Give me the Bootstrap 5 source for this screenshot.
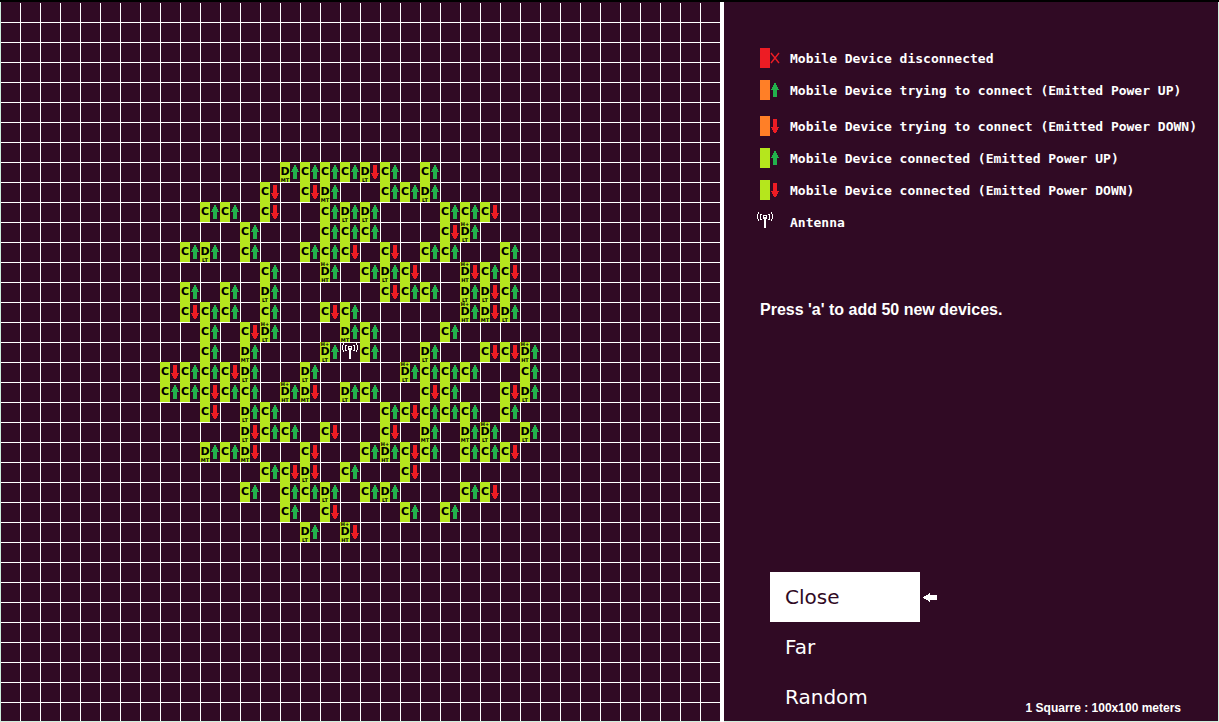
<!DOCTYPE html>
<html lang="en">
<head>
<meta charset="utf-8">
<meta name="viewport" content="width=device-width, initial-scale=1">
<title>Antenna simulation</title>
<link href="https://cdn.jsdelivr.net/npm/bootstrap@5.3.0/dist/css/bootstrap.min.css" rel="stylesheet">
<style>
  :root { --plum: #300a24; --lime: #b5e61d; --mint: #cdeedc; --cell: 20px; }
  body { background: var(--plum); color: #fff; border-top: 2px solid #000; }
  .sim-board {
    display: grid;
    grid-template-columns: repeat(36, var(--cell));
    grid-template-rows: repeat(36, var(--cell));
    background:
      linear-gradient(var(--mint), var(--mint)) 0 0 / 1px 100% no-repeat,
      linear-gradient(var(--mint), var(--mint)) 0 100% / 100% 1px no-repeat,
      linear-gradient(var(--plum), var(--plum)) 0 0 / 100% 1px no-repeat,
      linear-gradient(90deg, #fff 1px, transparent 1px) 0 0 / var(--cell) var(--cell),
      linear-gradient(#fff 1px, transparent 1px) 0 0 / var(--cell) var(--cell);
  }
  .sim-wrap { border-right: 4px solid #fff; }
  .device { width: 20px; height: 20px; }
  .device-tag {
    width: 10px; height: 20px; background: var(--lime); color: #000;
    display: grid; grid-template-rows: 4px 12px 4px;
    justify-items: center; align-items: center;
    font-family: "DejaVu Sans", sans-serif; font-weight: 700;
  }
  .device-kind { font-size: 11px; line-height: 12px; }
  .device-note { font-size: 5px; line-height: 4px; }
  .side-panel { box-shadow: inset -1px -1px var(--mint); padding-left: 36px; }
  .legend { display: grid; row-gap: 10px; padding-top: 46px; font: 700 13px/22px "DejaVu Sans Mono", monospace; }
  .legend-row { display: grid; grid-template-columns: 20px auto; column-gap: 10px; white-space: nowrap; }
  .legend svg, .device svg { display: block; }
  .hint { font: 700 16px/20px "Liberation Sans", sans-serif; margin-top: 66px; }
  .modes { width: 150px; margin-left: 10px; }
  .mode-btn {
    height: 50px; width: 150px; padding: 0 15px; text-align: left; color: #fff;
    font: 400 20px/24px "DejaVu Sans", sans-serif; border: 0; border-radius: 0;
  }
  .mode-btn.active, .mode-btn:hover { background: #fff !important; color: var(--plum) !important; }
  .mode-arrow { margin-left: 3px; }
  .scale-note { font: 700 12px/16px "Liberation Sans", sans-serif; padding: 0 38px 6px 0; }
</style>
</head>
<body>
<svg width="0" height="0" class="position-absolute" aria-hidden="true">
  <defs>
    <path id="up" shape-rendering="crispEdges" fill="#22b14c" d="M4 3h2v2h1v2h1v2h1v1h-2v7H3v-7H1V9h1V7h1V5h1z"/>
    <path id="down" shape-rendering="crispEdges" fill="#ed1c24" d="M3 3h4v8h2v1h-1v2h-1v2h-1v1H4v-1H3v-2H2v-2H1v-1h2z"/>
    <g id="mast" shape-rendering="crispEdges" fill="none" stroke="#fff">
      <path d="M6 4.500H10M6.500 5V7M9.500 5V7M6 7.500H10M3 3.500H5M3.500 4V8M3 8.500H5M11 3.500H13M12.500 4V8M11 8.500H13M1.500 1V3M.5 3V8M1.500 8V10M14.500 1V3M15.500 3V8M14.500 8V10"/>
      <path stroke-width="2" d="M8 6V17"/>
    </g>
  </defs>
</svg>
<div class="d-flex">
  <main class="sim-wrap flex-shrink-0"><div class="sim-board" id="board"></div></main>
  <aside class="side-panel flex-grow-1 d-flex flex-column">
    <div class="legend">
      <div class="legend-row"><svg width="20" height="20"><path fill="#ed1c24" d="M0 0h10v20H0z"/><path stroke="#ed1c24" stroke-width="1.400" d="M11 5l8 10M19 5l-8 10"/></svg><span>Mobile Device disconnected</span></div>
      <div class="legend-row"><svg width="20" height="20"><path fill="#ff7f27" d="M0 0h10v20H0z"/><use href="#up" x="10"/></svg><span>Mobile Device trying to connect (Emitted Power UP)</span></div>
      <div class="legend-row mt-1"><svg width="20" height="20"><path fill="#ff7f27" d="M0 0h10v20H0z"/><use href="#down" x="10"/></svg><span>Mobile Device trying to connect (Emitted Power DOWN)</span></div>
      <div class="legend-row"><svg width="20" height="20"><path fill="#b5e61d" d="M0 0h10v20H0z"/><use href="#up" x="10"/></svg><span>Mobile Device connected (Emitted Power UP)</span></div>
      <div class="legend-row"><svg width="20" height="20"><path fill="#b5e61d" d="M0 0h10v20H0z"/><use href="#down" x="10"/></svg><span>Mobile Device connected (Emitted Power DOWN)</span></div>
      <div class="legend-row"><svg width="20" height="20" overflow="visible"><use href="#mast" x="-3" y="-1"/></svg><span>Antenna</span></div>
    </div>
    <p class="hint mb-0">Press 'a' to add 50 new devices.</p>
    <div class="mt-auto d-flex align-items-end justify-content-between">
      <div class="modes d-flex flex-column">
        <div class="d-flex align-items-center">
          <button type="button" class="btn mode-btn active flex-shrink-0">Close</button>
          <svg class="mode-arrow flex-shrink-0" width="14" height="10" shape-rendering="crispEdges"><path fill="#fff" d="M0 5h1V4h2V3h2V2h1V1h1v2h7v5H7v2H6V9H5V8H3V7H1V6H0z"/></svg>
        </div>
        <button type="button" class="btn mode-btn">Far</button>
        <button type="button" class="btn mode-btn">Random</button>
      </div>
      <div class="scale-note">1 Squarre : 100x100 meters</div>
    </div>
  </aside>
</div>
<script src="https://cdn.jsdelivr.net/npm/bootstrap@5.3.0/dist/js/bootstrap.bundle.min.js"></script>
<script>
  // Row number -> devices. C = call; L, M, H = data device with LT, MT, HT load;
  // l, h = the same with the H+ mark. Then the column, and + or - for the power.
  const rows = {
    8: "M14+ C15+ C16+ C17+ L18- C19+ C21+",
    9: "C13- C15- M16+ C19+ C20+ L21+",
    10: "C10+ C11+ C13- C16+ L17+ L18+ C22+ C23+ C24-",
    11: "C12+ C16+ C17+ C18+ C22- l23+",
    12: "C9+ L10+ C12+ C15+ C16+ C17- C19- C21+ C22+ C25+",
    13: "C13+ h16+ C18+ L19+ C20- h23- C24+ C25-",
    14: "C9+ C11+ L13+ C19- C20+ C21+ L23+ L24- C25+",
    15: "C9- C10+ C11+ C13+ C16- C17+ h23+ M24- L25+",
    16: "C10+ C12- l13+ M17+ C18+ C22+",
    17: "C10+ M12+ l16+ A17+ C18+ L21+ C24- C25- h26+",
    18: "C8- C9+ C10+ C11- L12+ L15+ l20+ C21+ C22+ C23+ C26+",
    19: "C8+ C9+ C10- C11+ C12+ h14+ M15- L17+ C18+ C21- C22+ C25- L26+",
    20: "C10- L12+ C13+ C19+ C20- C21+ C22+ C23+ C25+",
    21: "L12- C13+ C14+ C16- C19- M21+ M23+ l24+ L26+",
    22: "M10+ C11+ M12- C15- C18+ h19+ C20- C21+ C23+ C24+ C25-",
    23: "C13+ C14- L15- C17+ C20-",
    24: "C12+ C14+ C15+ L16+ C18+ L19+ C23+ C24-",
    25: "C14+ C16- C20+ C22+",
    26: "L15+ h17-"
  };
  const board = document.getElementById("board");
  for (const [row, list] of Object.entries(rows)) {
    for (const item of list.split(" ")) {
      const kind = item[0], col = parseInt(item.slice(1)), up = item.endsWith("+");
      const cell = document.createElement("div");
      cell.className = "device d-flex";
      cell.style.gridArea = `${+row + 1} / ${col + 1}`;
      if (kind === "A") {
        cell.innerHTML = '<svg width="20" height="20"><use href="#mast" x="2"/></svg>';
      } else {
        const plus = kind === "l" || kind === "h";
        const load = kind === "C" ? "" : kind.toUpperCase() + "T";
        cell.innerHTML = `<div class="device-tag"><span class="device-note">${plus ? "H+" : ""}</span>` +
          `<span class="device-kind">${kind === "C" ? "C" : "D"}</span><span class="device-note">${load}</span></div>` +
          `<svg width="10" height="20"><use href="#${up ? "up" : "down"}"/></svg>`;
      }
      board.append(cell);
    }
  }
  document.querySelectorAll(".mode-btn").forEach((btn, i, all) => btn.addEventListener("click", () => {
    all.forEach(b => b.classList.toggle("active", b === btn));
  }));
</script>
</body>
</html>
